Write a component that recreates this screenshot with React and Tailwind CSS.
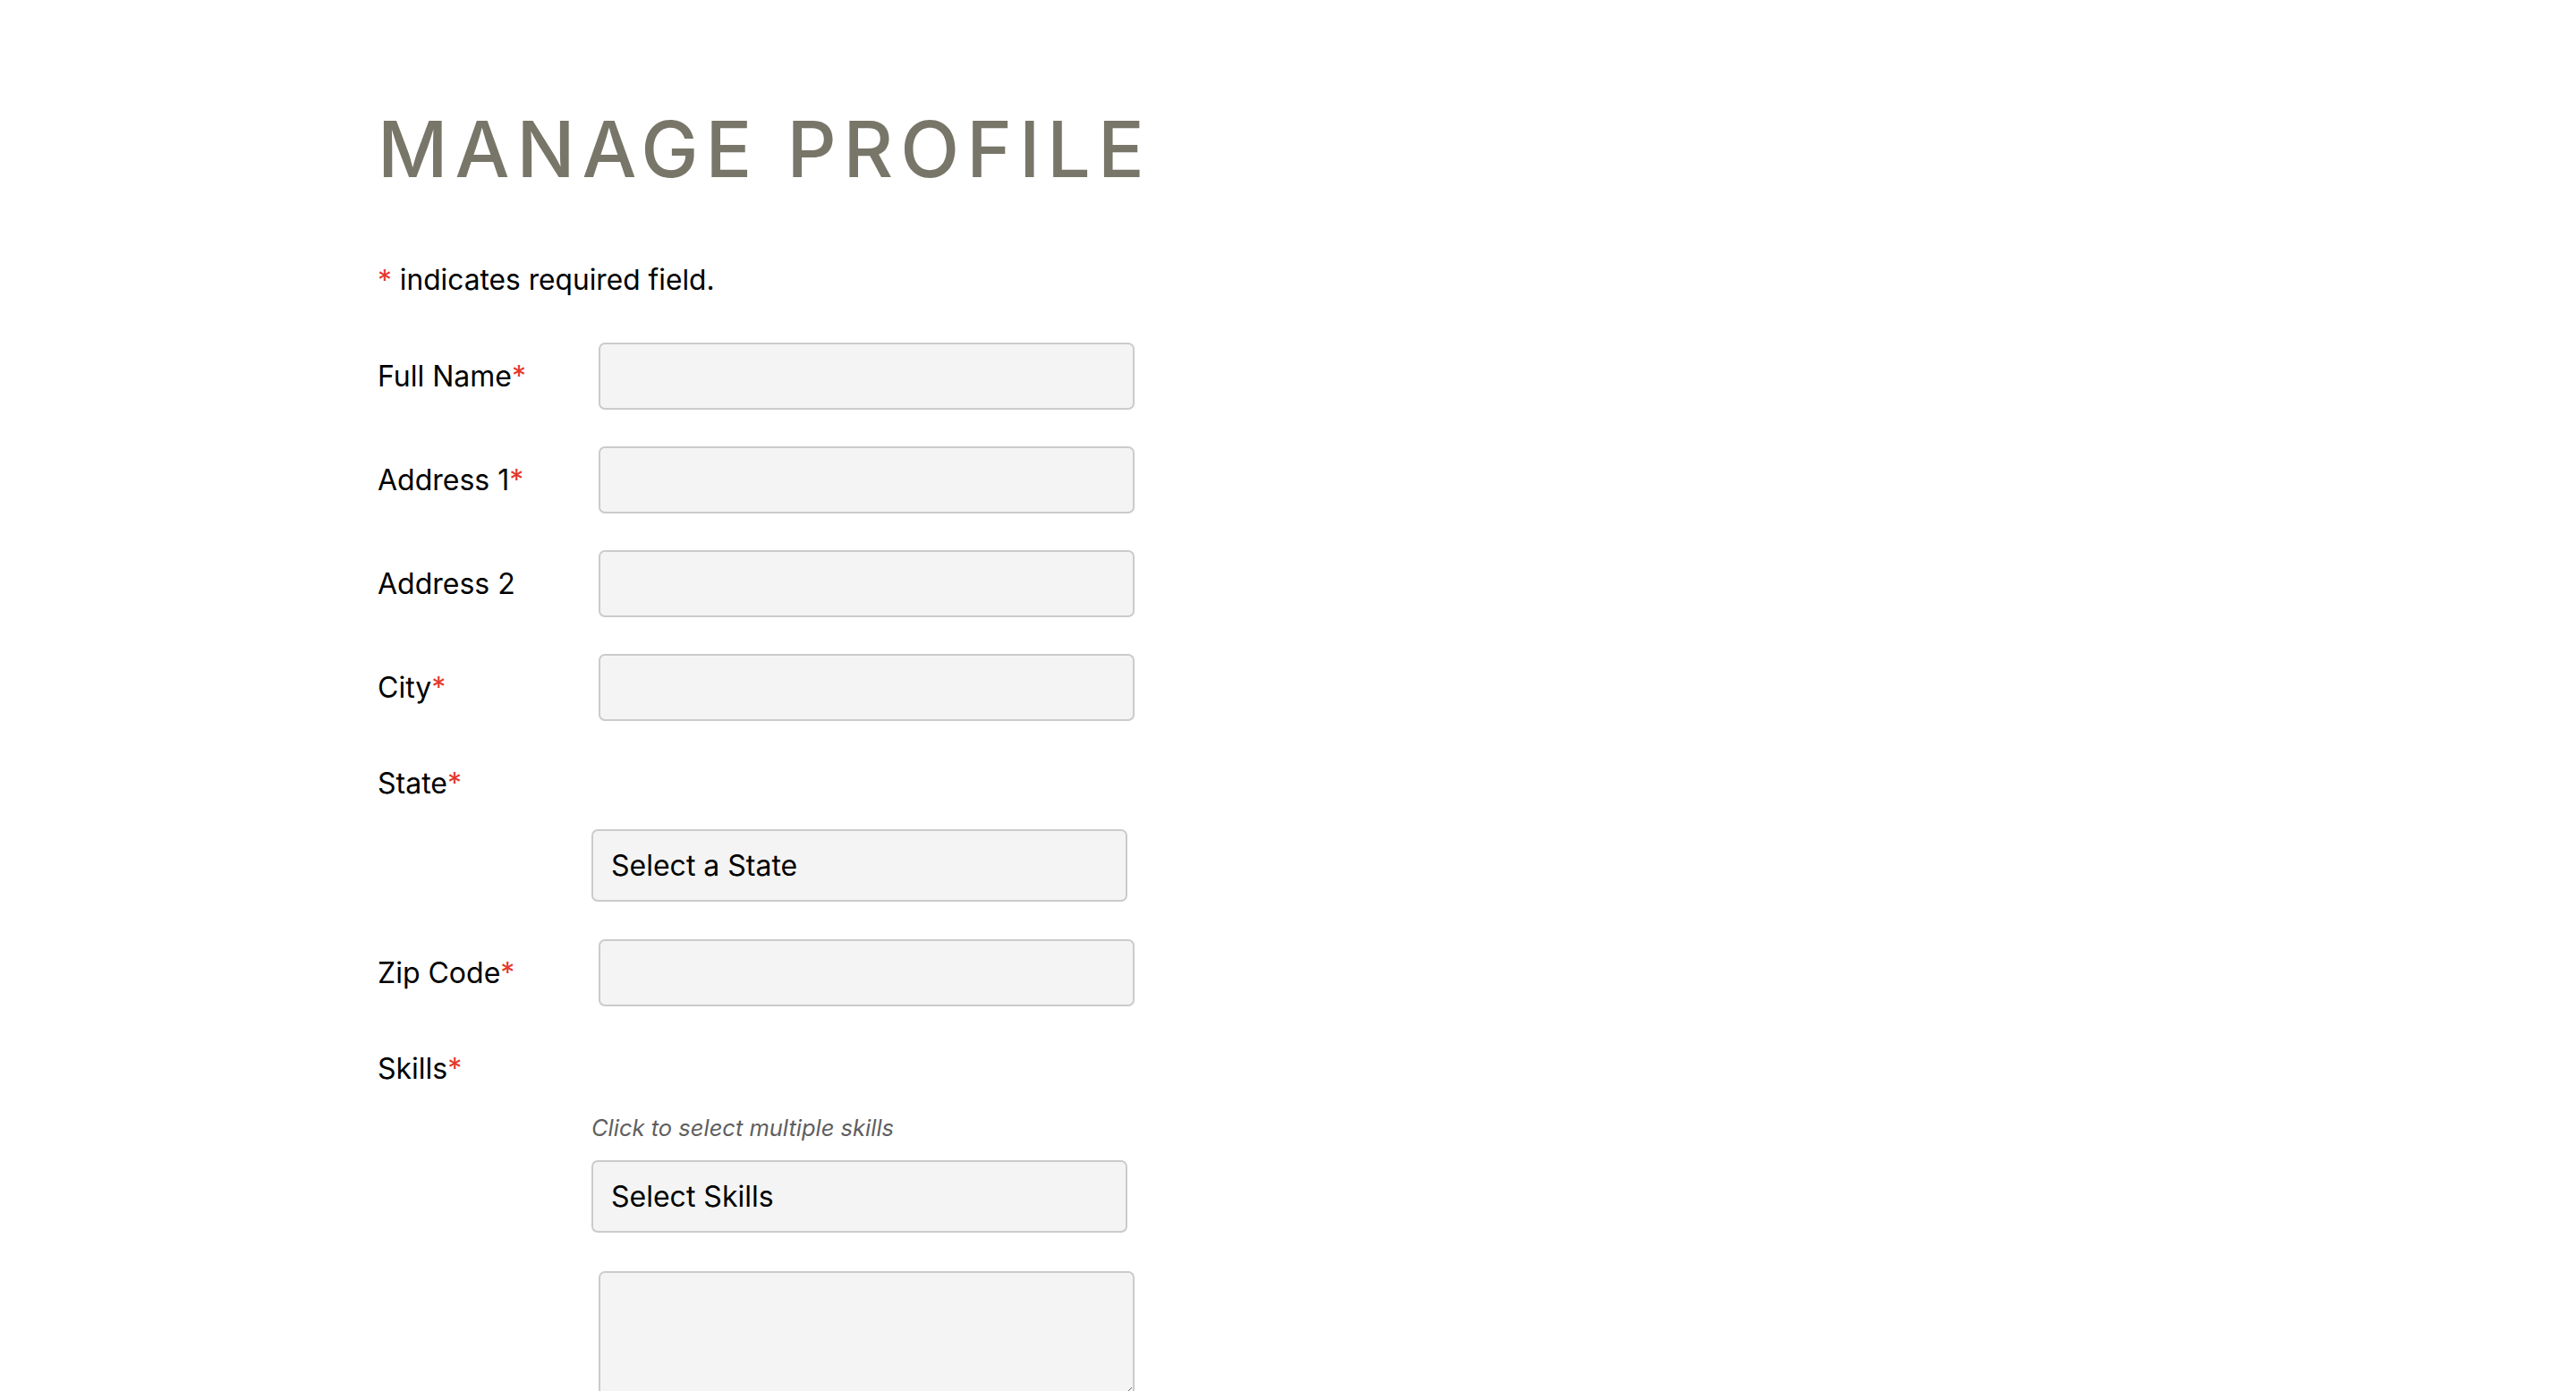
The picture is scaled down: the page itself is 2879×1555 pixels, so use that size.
import React from "react";

const Req = () => <span className="text-[#e5372c]">*</span>;

function TextRow({ label, required }) {
  return (
    <div className="flex items-center h-[75px] mb-[41px]">
      <label className="w-[247px] shrink-0 text-[32px] leading-[40px] text-black">
        {label}
        {required && <Req />}
      </label>
      <input
        type="text"
        className="w-[599px] h-[75px] bg-[#f4f4f4] border-2 border-[#cbcbcb] rounded-[7px] outline-none"
      />
    </div>
  );
}

function SelectBox({ text }) {
  return (
    <div className="ml-[239px] w-[599px] h-[81px] bg-[#f4f4f4] border-2 border-[#cbcbcb] rounded-[7px] flex items-center pl-[20px] text-[32px] text-black">
      {text}
    </div>
  );
}

export default function App() {
  return (
    <div className="min-h-screen bg-white font-['Inter',_'Noto_Sans',_sans-serif] overflow-hidden">
      <div className="pl-[422px] pt-[124px]">
        <h1 className="text-[86px] leading-none font-medium text-[#787668] tracking-[8px]">
          MANAGE PROFILE
        </h1>
        <p className="mt-[83px] text-[31.7px] leading-[40px] text-black">
          <Req /> indicates required field.
        </p>
        <div className="mt-[50px] flex flex-col">
          <TextRow label="Full Name" required />
          <TextRow label="Address 1" required />
          <TextRow label="Address 2" />
          <TextRow label="City" required />
          <div className="h-[58px] flex items-center text-[32px] text-black">
            <span>
              State
              <Req />
            </span>
          </div>
          <div className="mt-[22px] mb-[42px]">
            <SelectBox text="Select a State" />
          </div>
          <TextRow label="Zip Code" required />
          <div className="h-[58px] flex items-center text-[32px] text-black">
            <span>
              Skills
              <Req />
            </span>
          </div>
          <p className="ml-[239px] mt-[22px] text-[25.5px] italic text-[#5f5f5f] leading-[30px]">
            Click to select multiple skills
          </p>
          <div className="mt-[21px]">
            <SelectBox text="Select Skills" />
          </div>
          <div className="mt-[43px] pl-[247px]">
            <textarea className="block w-[599px] h-[140px] bg-[#f4f4f4] border-2 border-[#cbcbcb] rounded-[7px] outline-none" />
          </div>
        </div>
      </div>
    </div>
  );
}
